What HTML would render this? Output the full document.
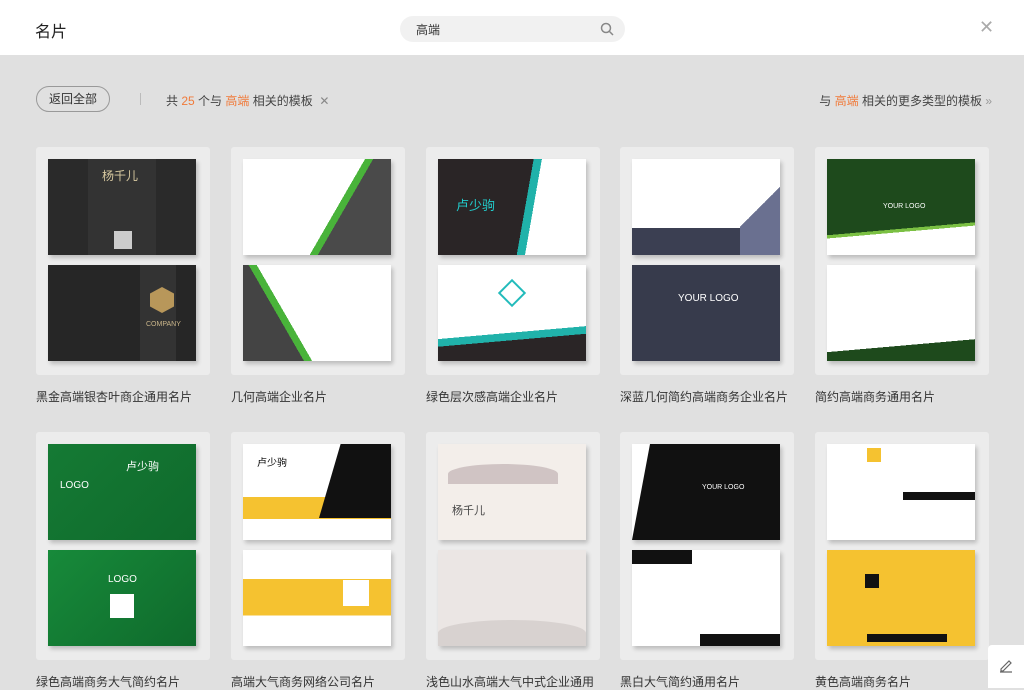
<!DOCTYPE html>
<html><head><meta charset="utf-8"><style>
*{margin:0;padding:0;box-sizing:border-box}
body{width:1024px;height:688px;overflow:hidden;background:#e0e0e0;font-family:"Liberation Sans","Noto Sans CJK SC",sans-serif;position:relative}
.hdr{position:absolute;left:0;top:0;width:1024px;height:55px;background:#fff}
.t{position:absolute;left:35px;top:18px;font-size:16px;color:#222}
.search{position:absolute;left:400px;top:16px;width:225px;height:26px;border-radius:13px;background:#f1f1f1}
.search span{position:absolute;left:16px;top:5px;font-size:12px;color:#333}
.x{position:absolute;left:979px;top:17px;font-size:18px;color:#aaa}
.btn{position:absolute;left:36px;top:86px;width:74px;height:26px;border:1px solid #999;border-radius:13px;font-size:12px;color:#333;text-align:center;line-height:24px}
.sep{position:absolute;left:140px;top:93px;width:1px;height:12px;background:#bbb}
.info{position:absolute;left:166px;top:92px;font-size:12px;color:#444}
.o{color:#f07a3a}
.more{position:absolute;right:32px;top:92px;font-size:12px;color:#444}
.tile{position:absolute;width:174px;height:228px;background:#ececec;border-radius:3px}
.c{position:absolute;left:12px;width:148px;height:96px;overflow:hidden;box-shadow:2px 3px 4px rgba(0,0,0,.2)}
.c1{top:12px}.c2{top:118px}
.lbl{position:absolute;font-size:12px;color:#333;white-space:nowrap}
.pen{position:absolute;left:988px;top:645px;width:36px;height:43px;background:#fff;border-radius:4px 0 0 0}
</style></head><body>
<div class="hdr"><div class="t">名片</div><div class="search"><span>高端</span>
<svg style="position:absolute;left:200px;top:6px" width="14" height="14" viewBox="0 0 14 14"><circle cx="6" cy="6" r="4.5" fill="none" stroke="#888" stroke-width="1.5"/><path d="M9.5 9.5L13 13" stroke="#888" stroke-width="1.5"/></svg></div>
<div class="x">✕</div></div>
<div class="btn">返回全部</div><div class="sep"></div>
<div class="info">共 <span class="o">25</span> 个与 <span class="o">高端</span> 相关的模板 &nbsp;<span style="color:#888">✕</span></div>
<div class="more">与 <span class="o">高端</span> 相关的更多类型的模板 <span style="color:#999">»</span></div>

<!-- row1 -->
<div class="tile" style="left:36px;top:147px">
<div class="c c1" style="background:linear-gradient(90deg,#2a2a2a 0 40px,#333 40px 108px,#2a2a2a 108px)"><div style="position:absolute;left:54px;top:8px;color:#d8c9a0;font-size:12px">杨千儿</div><div style="position:absolute;left:66px;top:72px;width:18px;height:18px;background:#ccc"></div></div>
<div class="c c2" style="background:linear-gradient(90deg,#262626 0 92px,#333 92px 128px,#262626 128px)"><div style="position:absolute;left:102px;top:22px;width:24px;height:26px;background:#b8975a;clip-path:polygon(50% 0,100% 25%,100% 75%,50% 100%,0 75%,0 25%)"></div><div style="position:absolute;left:98px;top:56px;color:#c9b58a;font-size:7px">COMPANY</div></div>
</div>
<div class="tile" style="left:231px;top:147px">
<div class="c c1" style="background:linear-gradient(120deg,#fff 0 60%,#49b33a 60% 64%,#4a4a4a 64%)"></div>
<div class="c c2" style="background:linear-gradient(60deg,#444 0 30%,#49b33a 30% 34%,#fff 34%)"></div>
</div>
<div class="tile" style="left:426px;top:147px">
<div class="c c1" style="background:linear-gradient(100deg,#2a2526 0 58%,#20b2aa 58% 63%,#fff 63%)"><div style="position:absolute;left:18px;top:36px;color:#2cc;font-size:13px">卢少驹</div></div>
<div class="c c2" style="background:linear-gradient(175deg,#fff 0 68%,#20b2aa 68% 75%,#2a2526 75%)"><div style="position:absolute;left:64px;top:18px;width:20px;height:20px;border:2px solid #2bb;transform:rotate(45deg)"></div></div>
</div>
<div class="tile" style="left:620px;top:147px">
<div class="c c1" style="background:linear-gradient(180deg,#fff 0 72%,#3b3f52 72%)"><div style="position:absolute;right:0;top:0;width:40px;height:96px;background:linear-gradient(135deg,#fff 50%,#6a7090 50%)"></div></div>
<div class="c c2" style="background:#373b4c"><div style="position:absolute;left:46px;top:28px;color:#fff;font-size:10px">YOUR LOGO</div></div>
</div>
<div class="tile" style="left:815px;top:147px">
<div class="c c1" style="background:linear-gradient(175deg,#1e4a1c 0 70%,#7bc043 70% 73%,#fff 73%)"><div style="position:absolute;left:56px;top:44px;color:#fff;font-size:7px">YOUR LOGO</div></div>
<div class="c c2" style="background:linear-gradient(175deg,#fff 0 80%,#1e4a1c 80%)"></div>
</div>
<div class="lbl" style="left:36px;top:388px">黑金高端银杏叶商企通用名片</div>
<div class="lbl" style="left:231px;top:388px">几何高端企业名片</div>
<div class="lbl" style="left:426px;top:388px">绿色层次感高端企业名片</div>
<div class="lbl" style="left:620px;top:388px">深蓝几何简约高端商务企业名片</div>
<div class="lbl" style="left:815px;top:388px">简约高端商务通用名片</div>

<!-- row2 -->
<div class="tile" style="left:36px;top:432px">
<div class="c c1" style="background:linear-gradient(135deg,#157a34,#0f6a2c)"><div style="position:absolute;left:78px;top:14px;color:#fff;font-size:11px">卢少驹</div><div style="position:absolute;left:12px;top:36px;color:#fff;font-size:10px">LOGO</div></div>
<div class="c c2" style="background:linear-gradient(135deg,#178a3a,#0f6a2c)"><div style="position:absolute;left:60px;top:24px;color:#fff;font-size:10px">LOGO</div><div style="position:absolute;left:62px;top:44px;width:24px;height:24px;background:#fff"></div></div>
</div>
<div class="tile" style="left:231px;top:432px">
<div class="c c1" style="background:linear-gradient(180deg,#fff 0 55%,#f5c230 55% 78%,#fff 78%)"><div style="position:absolute;right:0;top:0;width:72px;height:74px;background:#111;clip-path:polygon(30% 0,100% 0,100% 100%,0 100%)"></div><div style="position:absolute;left:14px;top:10px;font-size:10px">卢少驹</div></div>
<div class="c c2" style="background:linear-gradient(180deg,#fff 0 30%,#f5c230 30% 68%,#fff 68%)"><div style="position:absolute;left:100px;top:30px;width:26px;height:26px;background:#fff"></div></div>
</div>
<div class="tile" style="left:426px;top:432px">
<div class="c c1" style="background:#f3eeea"><div style="position:absolute;left:10px;top:20px;width:110px;height:20px;background:#b9a9aa;border-radius:50% 50% 0 0;opacity:.6"></div><div style="position:absolute;left:14px;top:58px;font-size:11px;color:#444">杨千儿</div></div>
<div class="c c2" style="background:#ebe6e4"><div style="position:absolute;left:0;top:70px;width:148px;height:26px;background:#d8d2d0;border-radius:50% 50% 0 0"></div></div>
</div>
<div class="tile" style="left:620px;top:432px">
<div class="c c1" style="background:#111"><div style="position:absolute;left:0;top:0;width:18px;height:96px;background:#fff;clip-path:polygon(0 0,100% 0,0 100%)"></div><div style="position:absolute;left:70px;top:40px;color:#fff;font-size:7px">YOUR LOGO</div></div>
<div class="c c2" style="background:#fff"><div style="position:absolute;left:0;top:0;width:60px;height:14px;background:#111"></div><div style="position:absolute;right:0;bottom:0;width:80px;height:12px;background:#111"></div></div>
</div>
<div class="tile" style="left:815px;top:432px">
<div class="c c1" style="background:#fff"><div style="position:absolute;left:76px;top:48px;width:72px;height:8px;background:#111"></div><div style="position:absolute;left:40px;top:4px;width:14px;height:14px;background:#f5c230"></div></div>
<div class="c c2" style="background:#f5c230"><div style="position:absolute;left:40px;top:84px;width:80px;height:8px;background:#111"></div><div style="position:absolute;left:38px;top:24px;width:14px;height:14px;background:#111"></div></div>
</div>
<div class="lbl" style="left:36px;top:673px">绿色高端商务大气简约名片</div>
<div class="lbl" style="left:231px;top:673px">高端大气商务网络公司名片</div>
<div class="lbl" style="left:426px;top:673px">浅色山水高端大气中式企业通用</div>
<div class="lbl" style="left:620px;top:673px">黑白大气简约通用名片</div>
<div class="lbl" style="left:815px;top:673px">黄色高端商务名片</div>

<div class="pen"><svg style="position:absolute;left:10px;top:12px" width="16" height="16" viewBox="0 0 16 16"><path d="M3 12L11 4l2 2-8 8H3z M2 15h12" fill="none" stroke="#666" stroke-width="1.2"/></svg></div>
</body></html>
